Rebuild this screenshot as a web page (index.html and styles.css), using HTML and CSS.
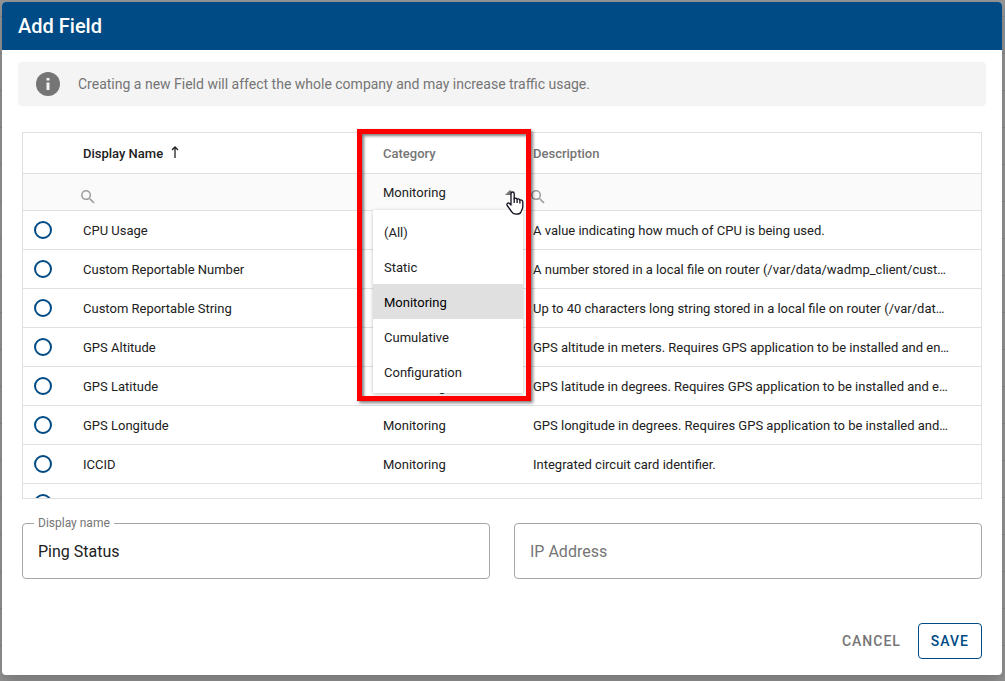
FILE: index.html
```html
<!DOCTYPE html>
<html lang="en">
<head>
<meta charset="utf-8">
<title>Add Field</title>
<link rel="stylesheet" href="styles.css">
</head>
<body>
<svg class="defs" aria-hidden="true">
  <symbol id="search" viewBox="0 0 18 18"><path d="M12.5 11h-.79l-.28-.27A6.47 6.47 0 0 0 13 6.5 6.5 6.5 0 1 0 6.5 13c1.61 0 3.09-.59 4.23-1.57l.27.28v.79l5 4.99L17.49 16l-4.99-5zm-6 0a4.5 4.5 0 1 1 0-9 4.5 4.5 0 0 1 0 9z"/></symbol>
</svg>
<main class="dialog" role="dialog" aria-labelledby="title">
  <header class="dialog-header"><h1 id="title">Add Field</h1></header>
  <div class="notice">
    <svg class="notice-icon" viewBox="0 0 24 24" aria-hidden="true"><circle cx="12" cy="12" r="12"/><path d="M10.5 6h3v2.500h-3zM10.500 10.500h3V18h-3z" fill="#f4f4f4"/></svg>
    <p>Creating a new Field will affect the whole company and may increase traffic usage.</p>
  </div>
  <div class="grid">
    <div class="grid-scroll">
      <table>
        <colgroup><col class="col-pick"><col class="col-name"><col class="col-category"><col></colgroup>
        <thead>
          <tr class="head-row">
            <th></th>
            <th class="sorted">Display Name<svg class="sort" viewBox="0 0 8 12" aria-hidden="true"><path d="M4 12V1M1 4l3-3 3 3"/></svg></th>
            <th>Category</th>
            <th>Description</th>
          </tr>
          <tr class="filter-row">
            <td></td>
            <td class="search-cell"><label class="search"><svg aria-hidden="true"><use href="#search"/></svg><input type="text" aria-label="Filter display name"></label></td>
            <td class="category-cell">
              <div class="category">
                <select aria-label="Filter category"><option>(All)</option><option>Static</option><option selected>Monitoring</option><option>Cumulative</option><option>Configuration</option></select>
                <svg class="caret" viewBox="0 0 10 5" aria-hidden="true"><path d="M0 5l5-5 5 5z"/></svg>
                <ul class="menu" role="listbox" aria-label="Category">
                  <li role="option">(All)</li>
                  <li role="option">Static</li>
                  <li role="option" class="selected" aria-selected="true">Monitoring</li>
                  <li role="option">Cumulative</li>
                  <li role="option">Configuration</li>
                </ul>
              </div>
            </td>
            <td class="search-cell"><label class="search"><svg aria-hidden="true"><use href="#search"/></svg><input type="text" aria-label="Filter description"></label></td>
          </tr>
        </thead>
        <tbody>
          <tr><td><input type="radio" name="field" aria-label="CPU Usage"></td><td>CPU Usage</td><td>Monitoring</td><td>A value indicating how much of CPU is being used.</td></tr>
          <tr><td><input type="radio" name="field" aria-label="Custom Reportable Number"></td><td>Custom Reportable Number</td><td>Monitoring</td><td>A number stored in a local file on router (/var/data/wadmp_client/cust…</td></tr>
          <tr><td><input type="radio" name="field" aria-label="Custom Reportable String"></td><td>Custom Reportable String</td><td>Monitoring</td><td>Up to 40 characters long string stored in a local file on router (/var/dat…</td></tr>
          <tr><td><input type="radio" name="field" aria-label="GPS Altitude"></td><td>GPS Altitude</td><td>Monitoring</td><td>GPS altitude in meters. Requires GPS application to be installed and en…</td></tr>
          <tr><td><input type="radio" name="field" aria-label="GPS Latitude"></td><td>GPS Latitude</td><td>Monitoring</td><td>GPS latitude in degrees. Requires GPS application to be installed and e…</td></tr>
          <tr><td><input type="radio" name="field" aria-label="GPS Longitude"></td><td>GPS Longitude</td><td>Monitoring</td><td>GPS longitude in degrees. Requires GPS application to be installed and…</td></tr>
          <tr><td><input type="radio" name="field" aria-label="ICCID"></td><td>ICCID</td><td>Monitoring</td><td>Integrated circuit card identifier.</td></tr>
          <tr><td><input type="radio" name="field" aria-label="Next field"></td><td></td><td></td><td></td></tr>
        </tbody>
      </table>
    </div>
    <div class="highlight"></div>
    <svg class="pointer" viewBox="0 0 18 24" aria-hidden="true"><path d="M5 14V2.800c0-2.400 3.200-2.400 3.200 0V8c.4-1.300 2.700-1.200 2.900.5.6-1 2.600-.8 2.800.8.8-.8 2.900-.4 2.900 1.500V16c0 2-1.500 3.500-1.800 5-.6 1.500-2 2.200-4.500 2.200S6.500 22.500 5.500 20.500L1.200 14.500C.2 12.800 2 11.200 3.500 12.500z"/><path d="M8.200 7.500V12M11.100 8.500V12M13.900 9.500V12.500"/></svg>
  </div>
  <div class="fields">
    <div class="field"><label for="display-name">Display name</label><input id="display-name" type="text" value="Ping Status"></div>
    <div class="field"><input type="text" aria-label="IP Address" placeholder="IP Address"></div>
  </div>
  <footer class="actions">
    <button type="button" class="cancel">CANCEL</button>
    <button type="button" class="save">SAVE</button>
  </footer>
</main>
</body>
</html>
```
FILE: styles.css
```css
* { box-sizing: border-box; }
body {
  margin: 0;
  height: 100vh;
  overflow: hidden;
  padding: 2px 3px 6px 2px;
  font-family: Roboto, "Liberation Sans", sans-serif;
  font-size: 13px;
  color: #212121;
  background: repeating-linear-gradient(#949494 0, #949494 16px, #868686 16px, #868686 17px, #949494 17px, #949494 37px);
}
input, select, button { font: inherit; color: inherit; }
.defs { position: absolute; width: 0; height: 0; }
.dialog {
  height: 100%;
  display: flex;
  flex-direction: column;
  background: #fff;
  border-radius: 4px;
  overflow: hidden;
  box-shadow: 0 8px 16px rgba(0, 0, 0, .2);
}
.dialog-header {
  display: flex;
  align-items: center;
  height: 48px;
  flex: none;
  padding: 0 16px;
  background: #004b85;
  color: #fff;
}
h1 { margin: 0; font-size: 20px; font-weight: 500; }
.notice {
  display: flex;
  align-items: center;
  gap: 18px;
  flex: none;
  height: 44px;
  margin: 12px 16px 26px;
  padding: 0 18px;
  border-radius: 4px;
  background: #f4f4f4;
  color: #757575;
  font-size: 14px;
}
.notice p { margin: 0; }
.notice-icon { width: 24px; height: 24px; fill: #757575; }
.grid { position: relative; flex: 1; min-height: 0; margin: 0 20px; }
.grid-scroll { height: 100%; overflow: hidden; border: 1px solid #e0e0e0; }
table { width: 100%; table-layout: fixed; border-collapse: separate; border-spacing: 0; }
.col-pick { width: 52px; }
.col-name { width: 300px; }
.col-category { width: 150px; }
th, td {
  height: 39px;
  padding: 0 8px;
  border-bottom: 1px solid #e0e0e0;
  text-align: left;
  white-space: nowrap;
  overflow: hidden;
  text-overflow: ellipsis;
}
td:first-child { padding-left: 11px; }
.head-row th { height: 41px; font-weight: 500; color: #757575; }
.head-row .sorted { color: #212121; }
.sort { width: 8px; height: 12px; margin-left: 8px; fill: none; stroke: #212121; stroke-width: 1.3; }
.filter-row td { height: 37px; background: #fafafa; }
.filter-row .search-cell { padding-left: 6px; }
.filter-row .category-cell { overflow: visible; }
input[type="radio"] {
  display: block;
  appearance: none;
  width: 18px;
  height: 18px;
  margin: 0;
  border: 2px solid #004b85;
  border-radius: 50%;
}
.search { display: flex; align-items: center; gap: 4px; padding-top: 10px; }
.search svg { width: 14px; height: 14px; flex: none; fill: #9e9e9e; }
.search input { width: 100%; height: 20px; min-width: 0; padding: 0; border: 0; outline: 0; background: none; }
.category { position: relative; display: flex; align-items: center; height: 36px; }
select { flex: 1; appearance: none; border: 0; padding: 0; background: none; outline: 0; }
.caret { width: 10px; height: 5px; margin-right: 2px; fill: #757575; }
.menu {
  position: absolute;
  z-index: 1;
  top: 36px;
  left: -10px;
  width: 150px;
  margin: 0;
  padding: 4px 0;
  list-style: none;
  background: #fff;
  box-shadow: 0 1px 4px rgba(0, 0, 0, .25);
}
.menu li { height: 35px; line-height: 37px; padding: 0 11px; }
.menu .selected { background: #e0e0e0; color: #000; }
.highlight {
  position: absolute;
  z-index: 2;
  top: -3px;
  left: 335px;
  width: 174px;
  height: 272px;
  border: 5px solid #f00;
  box-shadow: 2px 2px 3px rgba(0, 0, 0, .5), inset 2px 2px 3px rgba(0, 0, 0, .5);
  pointer-events: none;
}
.pointer {
  position: absolute;
  z-index: 3;
  top: 59px;
  left: 484px;
  width: 18px;
  height: 24px;
  fill: #fff;
  stroke: #101020;
  stroke-width: 1.3;
  stroke-linejoin: round;
}
.fields { display: grid; grid-template-columns: 1fr 1fr; gap: 24px; flex: none; margin: 24px 20px 44px; }
.field { position: relative; }
.field label {
  position: absolute;
  top: -8px;
  left: 12px;
  padding: 0 4px;
  font-size: 12px;
  line-height: 16px;
  background: #fff;
  color: #757575;
}
.field input {
  display: block;
  width: 100%;
  height: 56px;
  padding: 0 15px;
  border: 1px solid #a6a6a6;
  border-radius: 4px;
  outline: 0;
  font-size: 16px;
}
.field input::placeholder { color: #757575; opacity: 1; }
.actions { display: flex; justify-content: flex-end; gap: 4px; flex: none; padding: 0 20px 16px; }
.actions button {
  height: 36px;
  padding: 0 12px;
  border: 1px solid transparent;
  border-radius: 4px;
  background: none;
  font-size: 14px;
  font-weight: 500;
  letter-spacing: 1px;
}
.actions .cancel { color: #757575; }
.actions .save { border-color: #004b85; color: #004b85; }
```
